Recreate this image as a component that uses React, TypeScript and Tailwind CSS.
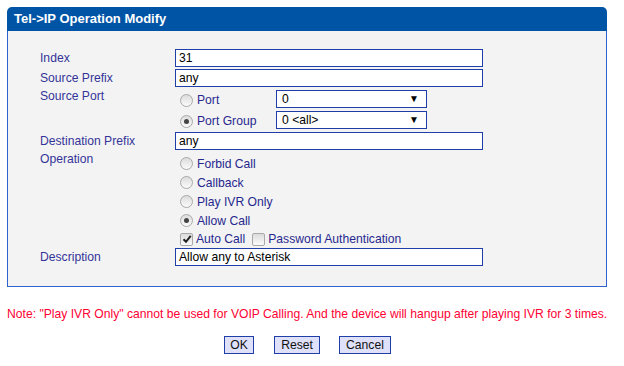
import React from "react";

const Radio = ({ checked }: { checked?: boolean }) => (
  <span className="ml-[5px] mr-[4px] inline-flex h-[13px] w-[13px] shrink-0 items-center justify-center rounded-full border border-[#a9a9a9] bg-gradient-to-b from-[#dcdcdc] to-[#fbfbfb]">
    {checked && <span className="h-[5px] w-[5px] rounded-full bg-[#444]" />}
  </span>
);

const Check = ({ checked }: { checked?: boolean }) => (
  <span className="ml-[5px] mr-[3px] inline-flex h-[13px] w-[13px] shrink-0 items-center justify-center rounded-[2px] border border-[#a9a9a9] bg-gradient-to-b from-[#dcdcdc] to-[#fbfbfb]">
    {checked && (
      <svg width="10" height="10" viewBox="0 0 10 10">
        <path d="M1.5 5.2 L4 7.8 L8.7 1.8" stroke="#222" strokeWidth="2" fill="none" />
      </svg>
    )}
  </span>
);

const Input = ({ value }: { value: string }) => (
  <div className="flex h-[18px] w-[308px] items-center border border-[#1f3ea8] bg-white pl-[3px] text-black">
    {value}
  </div>
);

const Select = ({ value }: { value: string }) => (
  <div className="flex h-[18px] w-[151px] items-center justify-between border border-[#1f3ea8] bg-white pl-[5px] pr-[7px] text-black">
    <span>{value}</span>
    <span className="text-[10px] leading-none">▼</span>
  </div>
);

export default function App() {
  return (
    <div
      className="h-[366px] w-[624px] bg-white text-[12.15px] leading-[14px]"
      style={{ fontFamily: '"Liberation Sans", Arial, sans-serif' }}
    >
      <div className="ml-[7px] w-[600px] pt-[7px]">
        <div className="flex h-[24px] items-center rounded-t-[5px] bg-[#0054a6] pl-[7px] text-[13px] font-bold text-white">
          Tel-&gt;IP Operation Modify
        </div>
        <div className="h-[256px] border border-t-0 border-[#2d62d0] bg-[#f3f3f3] pl-[32px] pt-[18px] text-[#333399]">
          <div className="flex items-center">
            <div className="w-[135px]">Index</div>
            <Input value="31" />
          </div>
          <div className="mt-[2px] flex items-center">
            <div className="w-[135px]">Source Prefix</div>
            <Input value="any" />
          </div>
          <div className="mt-[3px] flex">
            <div className="-mt-[1px] w-[135px]">Source Port</div>
            <div className="flex flex-col gap-[3px]">
              <div className="flex h-[18px] items-center">
                <div className="flex w-[101px] items-center pt-[2px]">
                  <Radio />
                  <span className="text-[#27288f]">Port</span>
                </div>
                <Select value="0" />
              </div>
              <div className="flex h-[18px] items-center">
                <div className="flex w-[101px] items-center pt-[2px]">
                  <Radio checked />
                  <span className="text-[#27288f]">Port Group</span>
                </div>
                <Select value="0 <all>" />
              </div>
            </div>
          </div>
          <div className="mt-[3px] flex items-center">
            <div className="w-[135px]">Destination Prefix</div>
            <Input value="any" />
          </div>
          <div className="mt-[4px] flex">
            <div className="-mt-[2px] w-[135px]">Operation</div>
            <div className="flex flex-col text-[#27288f]">
              {[
                ["Forbid Call", false],
                ["Callback", false],
                ["Play IVR Only", false],
                ["Allow Call", true],
              ].map(([t, c]) => (
                <div key={t as string} className="flex h-[19px] items-center">
                  <Radio checked={c as boolean} />
                  <span>{t as string}</span>
                </div>
              ))}
              <div className="flex h-[18px] items-center">
                <Check checked />
                <span>Auto Call</span>
                <span className="ml-[2px]" />
                <Check />
                <span>Password Authentication</span>
              </div>
            </div>
          </div>
          <div className="flex items-center">
            <div className="w-[135px]">Description</div>
            <Input value="Allow any to Asterisk" />
          </div>
        </div>
      </div>
      <div className="mt-[20px] pl-[7px] text-[#ff0033]">
        Note: "Play IVR Only" cannot be used for VOIP Calling. And the device will hangup after playing IVR for 3 times.
      </div>
      <div className="mt-[15px] flex w-[615px] justify-center text-[#111]">
        <div className="flex h-[18px] w-[30px] items-center justify-center border border-[#1f3ea8] bg-[#dfe0f9]">OK</div>
        <div className="ml-[20px] flex h-[18px] w-[46px] items-center justify-center border border-[#1f3ea8] bg-[#dfe0f9]">Reset</div>
        <div className="ml-[19px] flex h-[18px] w-[52px] items-center justify-center border border-[#1f3ea8] bg-[#dfe0f9]">Cancel</div>
      </div>
    </div>
  );
}
